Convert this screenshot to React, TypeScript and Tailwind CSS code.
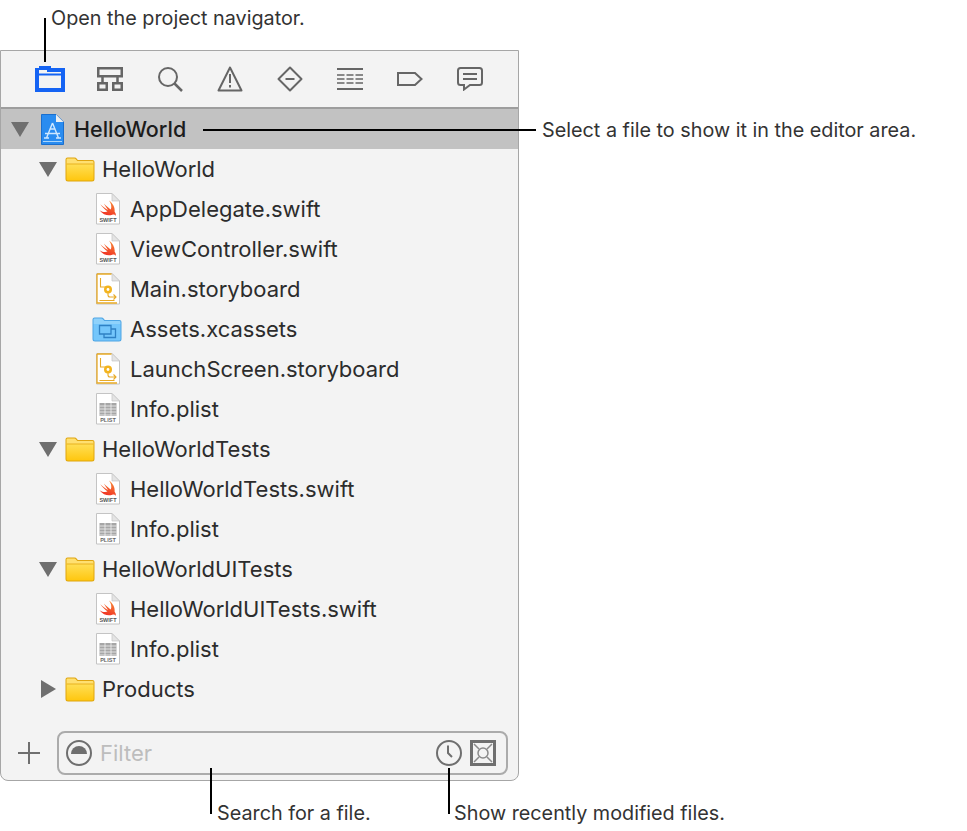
import type { ReactNode } from "react";

type FileKind = "swift" | "storyboard" | "assets" | "plist" | "folder";

interface TreeRow {
    name: string;
    kind: FileKind;
    depth: 1 | 2;
    arrow?: "down" | "right";
}

const rows: TreeRow[] = [
    { name: "HelloWorld", kind: "folder", depth: 1, arrow: "down" },
    { name: "AppDelegate.swift", kind: "swift", depth: 2 },
    { name: "ViewController.swift", kind: "swift", depth: 2 },
    { name: "Main.storyboard", kind: "storyboard", depth: 2 },
    { name: "Assets.xcassets", kind: "assets", depth: 2 },
    { name: "LaunchScreen.storyboard", kind: "storyboard", depth: 2 },
    { name: "Info.plist", kind: "plist", depth: 2 },
    { name: "HelloWorldTests", kind: "folder", depth: 1, arrow: "down" },
    { name: "HelloWorldTests.swift", kind: "swift", depth: 2 },
    { name: "Info.plist", kind: "plist", depth: 2 },
    { name: "HelloWorldUITests", kind: "folder", depth: 1, arrow: "down" },
    { name: "HelloWorldUITests.swift", kind: "swift", depth: 2 },
    { name: "Info.plist", kind: "plist", depth: 2 },
    { name: "Products", kind: "folder", depth: 1, arrow: "right" },
];

function Arrow({ dir }: { dir: "down" | "right" }) {
    return (
        <svg width="18" height="18" viewBox="0 0 18 18" className="shrink-0">
            {dir === "down" ? <path d="M0 2h18L9 17z" fill="#6f6f6f" /> : <path d="M2 0v18L17 9z" fill="#6f6f6f" />}
        </svg>
    );
}

function FolderIcon() {
    return (
        <svg width="30" height="25" viewBox="0 0 30 25" className="shrink-0">
            <defs>
                <linearGradient id="folderFace" x1="0" y1="0" x2="0" y2="1">
                    <stop offset="0" stopColor="#ffdf57" />
                    <stop offset="1" stopColor="#ffc70f" />
                </linearGradient>
            </defs>
            <path d="M.5 2.500q0-2 2-2h7q1.500 0 2.300 1.200l1 1.300h14.700q2 0 2 2v17q0 2.500-2.500 2.500H3q-2.500 0-2.500-2.500z" fill="#dfa50f" />
            <path d="M1.500 2.500q0-1 1-1h6.800q1 0 1.700 1l1.300 1.500h15.200q1 0 1 1V7h-27z" fill="#ffe071" />
            <path d="M1.500 7h27v15q0 1.500-1.500 1.500H3q-1.500 0-1.500-1.500z" fill="url(#folderFace)" />
            <path d="M1.500 6.500h27v1h-27z" fill="#e8b21f" />
        </svg>
    );
}

function AssetsIcon() {
    return (
        <svg width="30" height="25" viewBox="0 0 30 25" className="shrink-0">
            <path d="M.5 2.500q0-2 2-2h7q1.500 0 2.300 1.200l1 1.300h14.700q2 0 2 2v17q0 2.500-2.500 2.500H3q-2.500 0-2.500-2.500z" fill="#4ea5e4" />
            <path d="M1.500 7h27v15q0 1.500-1.500 1.500H3q-1.500 0-1.500-1.500z" fill="#74c6fb" />
            <path d="M1.500 2.500q0-1 1-1h6.800q1 0 1.700 1l1.300 1.500h15.200q1 0 1 1V7h-27z" fill="#8fd2fb" />
            <path d="M7.500 8.500h11.500v8.500H7.500z M12 17v3.500h11.500V12H19" fill="none" stroke="#2f81c4" strokeWidth="1.300" />
        </svg>
    );
}

function DocSheet({ children }: { children: ReactNode }) {
    return (
        <svg width="24" height="32" viewBox="0 0 24 32" className="shrink-0">
            <path d="M.5.500h15.500l7.500 7.500v23H.5z" fill="#fff" stroke="#c4c4c4" />
            <path d="M16 .5V8h7.500z" fill="#e4e4e4" stroke="#c4c4c4" strokeWidth="0.700" />
            {children}
        </svg>
    );
}

function SwiftIcon() {
    return (
        <DocSheet>
            <defs>
                <linearGradient id="swiftFill" x1="0.7" y1="0" x2="0.3" y2="1">
                    <stop offset="0" stopColor="#f88a36" />
                    <stop offset="1" stopColor="#f02d24" />
                </linearGradient>
            </defs>
            <path d="M13 7.500c3.800 2.800 6.200 7 5.600 11.300 1.300 1.600 1.500 3.200 1 4-.7-1.200-2-1.700-3.300-1.100-3.800 1.600-9 .3-12.800-4.500 2.800 1.800 5.700 2.400 8 1.400-3-2.300-5.700-5.300-7.200-7.400 2.500 2.200 5.500 4.500 7.800 5.900C10.500 15 9 12.600 7.800 10.500c2.700 2.700 5.300 4.800 7 5.900C16 13.500 15 10 13 7.500z" fill="url(#swiftFill)" />
            <text x="12" y="28.500" textAnchor="middle" fontSize="5.500" fontWeight="700" fill="#555" fontFamily="'Liberation Sans', sans-serif">SWIFT</text>
        </DocSheet>
    );
}

function StoryboardIcon() {
    return (
        <svg width="24" height="32" viewBox="0 0 24 32" className="shrink-0">
            <path d="M.5.500h15.500l7.500 7.500v23H.5z" fill="#fff" stroke="#c4c4c4" />
            <path d="M16 .5V8h7.500z" fill="#e4e4e4" stroke="#c4c4c4" strokeWidth="0.700" />
            <path d="M1 1h14.500M1 1v29h20" fill="none" stroke="#e8aa26" strokeWidth="1.300" />
            <path d="M4.500 5v9h6M12 14v8c0 1.500 1 2 2 2h6M17.500 21.500l2.500 2.500-2.500 2.500M3.500 27.500h15" fill="none" stroke="#e8aa26" strokeWidth="1.100" />
            <circle cx="12" cy="16.500" r="4" fill="#f3b41f" />
            <circle cx="12" cy="16.500" r="1.400" fill="#fff" />
        </svg>
    );
}

function PlistIcon() {
    return (
        <DocSheet>
            <path d="M3.500 10h17v13h-17z" fill="#a6a6a6" />
            <path d="M3.500 13h17M3.500 16h17M3.500 19h17M3.500 22h17M9 10v13M15 10v13" stroke="#f2f2f2" strokeWidth="0.800" />
            <text x="12" y="29" textAnchor="middle" fontSize="5.500" fontWeight="700" fill="#666" fontFamily="'Liberation Sans', sans-serif">PLIST</text>
        </DocSheet>
    );
}

function ProjectIcon() {
    return (
        <svg width="23" height="31" viewBox="0 0 23 31" className="shrink-0">
            <path d="M.5.500h14.500l7.500 7.500v22.500H.5z" fill="#2a8cf0" stroke="#1a6fce" />
            <path d="M15 .5V8h7.500z" fill="#f0f0f0" />
            <path d="M2 27.500h19" stroke="#a9d6fc" strokeWidth="1" />
            <path d="M11.500 9L5.500 24M11.500 9L17.500 24M4 19.500h15M3 24h5M15 24h5M8.500 15h6" fill="none" stroke="#cfe8ff" strokeWidth="1.400" />
        </svg>
    );
}

function RowIcon({ kind }: { kind: FileKind }) {
    if (kind === "folder") return <FolderIcon />;
    if (kind === "assets") return <AssetsIcon />;
    if (kind === "swift") return <SwiftIcon />;
    if (kind === "storyboard") return <StoryboardIcon />;
    return <PlistIcon />;
}

function Toolbar() {
    const gray = "#666666";
    return (
        <div className="grid h-[58px] grid-cols-[repeat(8,60px)] place-items-center border-b-2 border-[#9d9d9d] pl-[19px]">
            <svg width="30" height="26" viewBox="0 0 30 26">
                <path d="M0 2h4V0h12v2h14v24H0z" fill="#1463f3" />
                <path d="M4 9.500h22V22H4zM4 4h8v2h14v1.500H4z" fill="#f3f3f3" />
            </svg>
            <svg width="26" height="24" viewBox="0 0 26 24" fill="none" stroke={gray} strokeWidth="2.500">
                <path d="M1.250 1.250h23.500v8H1.250zM5.500 9.250V16M20.500 9.250V16M1.250 16.250h8.500v6.500h-8.500zM16.250 16.250h8.500v6.500h-8.500z" />
            </svg>
            <svg width="25" height="25" viewBox="0 0 25 25" fill="none" stroke={gray} strokeWidth="2">
                <circle cx="10" cy="10" r="9" />
                <path d="M16.500 16.500l7.500 7.500" strokeWidth="2.500" />
            </svg>
            <svg width="26" height="26" viewBox="0 0 26 26" fill="none" stroke={gray} strokeWidth="2">
                <path d="M13 1.500L1.500 24.500h23z" strokeLinejoin="round" />
                <path d="M13 8v9M13 19v2.500" />
            </svg>
            <svg width="26" height="26" viewBox="0 0 26 26" fill="none" stroke={gray} strokeWidth="2">
                <path d="M13 1.500L24.500 13 13 24.500 1.500 13z" strokeLinejoin="round" />
                <path d="M8.500 13h9" />
            </svg>
            <svg width="26" height="22" viewBox="0 0 26 22" fill="none" stroke={gray}>
                <path d="M0 1h26M0 21h26" strokeWidth="2" />
                <path d="M0 7h7.500M9.500 7h7M18.500 7h7.500M0 11h7.500M9.500 11h7M18.500 11h7.500M0 15h7.500M9.500 15h7M18.500 15h7.500" strokeWidth="1.500" />
            </svg>
            <svg width="26" height="14" viewBox="0 0 26 14" fill="none" stroke={gray} strokeWidth="2">
                <path d="M1 1h17l6.500 6-6.500 6H1z" />
            </svg>
            <svg width="26" height="24" viewBox="0 0 26 24" fill="none" stroke={gray} strokeWidth="2">
                <path d="M3.500 1h19q2.500 0 2.500 2.500v12q0 2.500-2.500 2.500H13l-6 4.500V18H3.500Q1 18 1 15.500v-12Q1 1 3.500 1z" />
                <path d="M6 7h14M6 12h14" />
            </svg>
        </div>
    );
}

function FilterBar() {
    return (
        <div className="mt-[22px] flex items-center pl-[17px]">
            <svg width="22" height="22" viewBox="0 0 22 22" fill="none" stroke="#6f6f6f" strokeWidth="2" className="shrink-0">
                <path d="M11 0v22M0 11h22" />
            </svg>
            <div className="ml-[17px] flex h-[44px] w-[451px] items-center rounded-[8px] border-2 border-[#ababab] pl-[7px] pr-[10px]">
                <svg width="26" height="26" viewBox="0 0 26 26" className="shrink-0">
                    <circle cx="13" cy="13" r="12" fill="none" stroke="#6f6f6f" strokeWidth="2" />
                    <path d="M5 14a8 8 0 0 1 16 0z" fill="#6f6f6f" />
                </svg>
                <span className="ml-[8px] flex-1 text-[22px] text-[#bdbdbd]">Filter</span>
                <svg width="26" height="26" viewBox="0 0 26 26" fill="none" stroke="#6f6f6f" strokeWidth="2" className="shrink-0">
                    <circle cx="13" cy="13" r="12" />
                    <path d="M12 5.500V13l4 4" />
                </svg>
                <svg width="26" height="26" viewBox="0 0 26 26" fill="none" className="ml-[8px] shrink-0">
                    <path d="M1.500 1.500h23v23h-23z" stroke="#6f6f6f" strokeWidth="3" />
                    <circle cx="13" cy="13" r="5" stroke="#8a8a8a" strokeWidth="1.500" />
                    <path d="M4 4l5 5M22 4l-5 5M4 22l5-5M22 22l-5-5" stroke="#8a8a8a" strokeWidth="1.500" />
                </svg>
            </div>
        </div>
    );
}

export default function App() {
    return (
        <div className="relative h-[831px] w-[967px] bg-white font-['Inter',sans-serif] text-[#333]">
            {/* Top caption */}
            <div className="h-[50px] pl-[51px] pt-[6px] text-[19.800px] leading-[24px]">Open the project navigator.</div>
            <div className="absolute left-[44px] top-[18px] h-[44px] w-[2px] bg-black" />

            {/* Navigator panel */}
            <div className="h-[731px] w-[519px] rounded-b-[8px] border border-[#a6a6a6] bg-[#f3f3f3]">
                <Toolbar />

                <div className="flex h-[40px] items-center bg-[#c2c2c2] pl-[10px]">
                    <Arrow dir="down" />
                    <div className="ml-[12px] flex"><ProjectIcon /></div>
                    <span className="ml-[10px] text-[21.500px] font-medium text-[#1c1c1c]">HelloWorld</span>
                </div>

                <div className="flex flex-col">
                    {rows.map((row, i) => (
                        <div key={i} className={`flex h-[40px] items-center ${row.depth === 1 ? "pl-[38px]" : row.kind === "assets" ? "pl-[91px]" : "pl-[95px]"}`}>
                            {row.arrow && <Arrow dir={row.arrow} />}
                            {row.arrow && <span className="w-[8px]" />}
                            <RowIcon kind={row.kind} />
                            <span className={`text-[22px] text-[#2c2c2c] ${row.kind === "folder" ? "ml-[7px]" : row.kind === "assets" ? "ml-[8px]" : "ml-[10px]"}`}>{row.name}</span>
                        </div>
                    ))}
                </div>

                <FilterBar />
            </div>

            {/* Selected row callout */}
            <div className="absolute left-[203px] top-[129px] h-[2px] w-[333px] bg-black" />
            <div className="absolute left-[542px] top-[118px] text-[19.800px] leading-[24px]">Select a file to show it in the editor area.</div>

            {/* Bottom callouts */}
            <div className="absolute left-[210px] top-[768px] h-[46px] w-[2px] bg-black" />
            <div className="absolute left-[217px] top-[801px] text-[19.800px] leading-[24px]">Search for a file.</div>
            <div className="absolute left-[448px] top-[768px] h-[46px] w-[2px] bg-black" />
            <div className="absolute left-[454px] top-[801px] text-[19.800px] leading-[24px]">Show recently modified files.</div>
        </div>
    );
}
